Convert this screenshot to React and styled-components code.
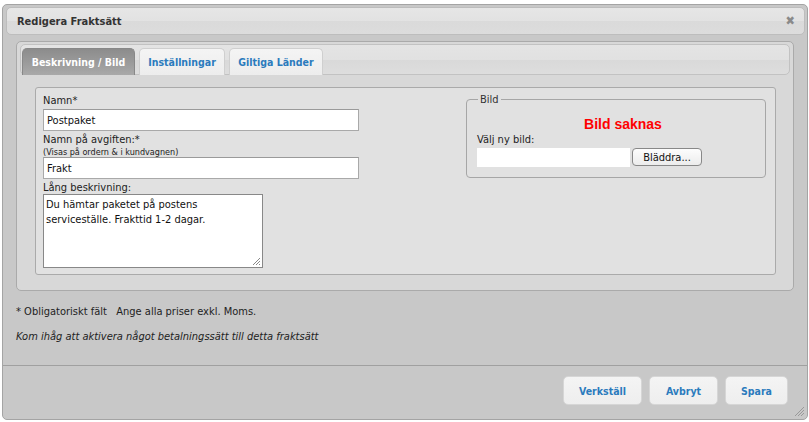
import React from "react";
import styled, { createGlobalStyle } from "styled-components";

const Global = createGlobalStyle`
  html, body { margin: 0; padding: 0; background: #fff; }
  body { font-family: "DejaVu Sans Condensed", "DejaVu Sans", Verdana, sans-serif; font-size: 11px; color: #222; }
`;

const Dialog = styled.div`
  box-sizing: border-box;
  margin: 4px 1px 0 2px;
  width: 806px;
  height: 416px;
  border: 1px solid #a4a4a4;
  border-radius: 5px;
  background: #c8c8c8;
  display: flex;
  flex-direction: column;
  position: relative;
  padding: 2px 2px 0 3px;
`;

const TitleBar = styled.div`
  box-sizing: border-box;
  height: 28px;
  border: 1px solid #bdbdbd;
  border-radius: 5px;
  background: linear-gradient(#e6e6e6 0%, #e2e2e2 50%, #dadada 51%, #dcdcdc 100%);
  display: flex;
  align-items: center;
  justify-content: space-between;
  padding: 0 9px 0 10px;
`;

const Title = styled.span`
  font-weight: bold;
  color: #333;
  font-size: 11px;
`;

const Close = styled.span`
  color: #8a8a8a;
  font-size: 12.5px;
  font-weight: bold;
  line-height: 1;
`;

const Content = styled.div`
  box-sizing: border-box;
  height: 330px;
  display: flex;
  flex-direction: column;
  padding: 6px 11px 0 10px;
`;

const TabBox = styled.div`
  box-sizing: border-box;
  height: 250px;
  border: 1px solid #aaa;
  border-radius: 5px;
  background: #d8d8d8;
  padding: 2px 3px;
`;

const TabHeader = styled.div`
  box-sizing: border-box;
  height: 31px;
  border: 1px solid #c2c2c2;
  border-radius: 5px;
  background: linear-gradient(#e4e4e4 0%, #e1e1e1 50%, #d9d9d9 51%, #dddddd 100%);
  display: flex;
  align-items: flex-end;
  gap: 4px;
  padding: 0 1px;
`;

const Tab = styled.div`
  box-sizing: border-box;
  width: ${(p) => p.$w}px;
  height: 27px;
  margin-bottom: -1px;
  border: 1px solid ${(p) => (p.$active ? "#888" : "#cfcfcf")};
  border-bottom: none;
  border-radius: 5px 5px 0 0;
  display: flex;
  align-items: center;
  justify-content: center;
  font-weight: bold;
  font-size: 10.5px;
  color: ${(p) => (p.$active ? "#fff" : "#2b7bbd")};
  background: ${(p) =>
    p.$active
      ? "linear-gradient(#8c8c8c 0%, #9a9a9a 50%, #a9a9a9 100%)"
      : "linear-gradient(#f4f4f4, #ededed)"};
`;

const Panel = styled.div`
  box-sizing: border-box;
  margin: 12px 14px 0 15px;
  height: 188px;
  border: 1px solid #aaa;
  border-radius: 3px;
  background: #e1e1e1;
  display: flex;
  justify-content: space-between;
  padding: 6px 9px 0 7px;
`;

const LeftCol = styled.div`
  width: 316px;
  display: flex;
  flex-direction: column;
`;

const Label = styled.label`
  display: block;
  color: #222;
  font-size: 11px;
  line-height: 13px;
`;

const Small = styled.span`
  display: block;
  font-size: 9px;
  line-height: 10px;
  margin: 1px 0 -2px;
`;

const TextInput = styled.div`
  box-sizing: border-box;
  width: 316px;
  height: 22px;
  margin: 2px 0 2px;
  border: 1px solid #a9a9a9;
  border-top-color: #9a9a9a;
  background: #fff;
  display: flex;
  align-items: center;
  padding: 0 3px;
  font-size: 11px;
  color: #111;
`;

const TextArea = styled.div`
  box-sizing: border-box;
  position: relative;
  width: 220px;
  height: 74px;
  margin-top: 0;
  border: 1px solid #888;
  background: #fff;
  padding: 2px 2px;
  font-size: 11px;
  line-height: 15px;
  color: #111;
`;

const Grip = styled.svg`
  position: absolute;
  right: 1px;
  bottom: 1px;
`;

const Fieldset = styled.fieldset`
  box-sizing: border-box;
  width: 300px;
  height: 85px;
  margin: -1px 0 0 0;
  border: 1px solid #a6a6a6;
  border-radius: 4px;
  padding: 10px 10px 0 10px;
  display: flex;
  flex-direction: column;
  legend {
    padding: 0 2px;
    margin-left: 1px;
    font-size: 11px;
    color: #333;
  }
`;

const Missing = styled.div`
  font-family: "Liberation Sans", Arial, sans-serif;
  font-weight: bold;
  font-size: 14px;
  color: #f00;
  text-align: center;
  margin: 0 0 1px 14px;
  line-height: 16px;
`;

const FileRow = styled.div`
  display: flex;
  align-items: flex-start;
  gap: 2px;
  margin-top: 2px;
`;

const FileField = styled.div`
  width: 153px;
  height: 19px;
  background: #fff;
`;

const Browse = styled.div`
  box-sizing: border-box;
  height: 18px;
  width: 70px;
  border: 1px solid #888;
  border-radius: 4px;
  background: linear-gradient(#fdfdfd, #ececec);
  display: flex;
  align-items: center;
  justify-content: center;
  font-size: 11px;
  color: #111;
`;

const Note = styled.p`
  margin: ${(p) => p.$m};
  font-size: 11px;
  color: #222;
  font-style: ${(p) => (p.$italic ? "italic" : "normal")};
  white-space: pre;
`;

const ButtonPane = styled.div`
  flex: 1;
  margin: 0 -2px 0 -3px;
  border-top: 1px solid #a0a0a0;
  display: flex;
  justify-content: flex-end;
  align-items: flex-start;
  gap: 7px;
  padding: 10px 19px 0 0;
  position: relative;
`;

const Button = styled.div`
  box-sizing: border-box;
  width: ${(p) => p.$w}px;
  height: 29px;
  border: 1px solid #d6d6d6;
  border-radius: 5px;
  background: linear-gradient(#f4f4f4, #eeeeee);
  display: flex;
  align-items: center;
  justify-content: center;
  font-weight: bold;
  color: #2b7bbd;
  font-size: 10.5px;
`;

const CornerGrip = styled.svg`
  position: absolute;
  right: 2px;
  bottom: 2px;
`;

export default function App() {
  return (
    <>
      <Global />
      <Dialog>
        <TitleBar>
          <Title>Redigera Fraktsätt</Title>
          <Close>✖</Close>
        </TitleBar>
        <Content>
          <TabBox>
            <TabHeader>
              <Tab $active $w={113}>Beskrivning / Bild</Tab>
              <Tab $w={86}>Inställningar</Tab>
              <Tab $w={94}>Giltiga Länder</Tab>
            </TabHeader>
            <Panel>
              <LeftCol>
                <Label>Namn*</Label>
                <TextInput>Postpaket</TextInput>
                <Label>
                  Namn på avgiften:*
                  <Small>(Visas på ordern &amp; i kundvagnen)</Small>
                </Label>
                <TextInput>Frakt</TextInput>
                <Label>Lång beskrivning:</Label>
                <TextArea>
                  Du hämtar paketet på postens serviceställe. Frakttid 1-2 dagar.
                  <Grip width="9" height="9" viewBox="0 0 9 9">
                    <path d="M8 1L1 8M8 4L4 8M8 7L7 8" stroke="#888" strokeWidth="1" />
                  </Grip>
                </TextArea>
              </LeftCol>
              <Fieldset>
                <legend>Bild</legend>
                <Missing>Bild saknas</Missing>
                <Label>Välj ny bild:</Label>
                <FileRow>
                  <FileField />
                  <Browse>Bläddra...</Browse>
                </FileRow>
              </Fieldset>
            </Panel>
          </TabBox>
          <Note $m="14px 0 0 0">{"* Obligatoriskt fält   Ange alla priser exkl. Moms."}</Note>
          <Note $m="12px 0 0 0" $italic>Kom ihåg att aktivera något betalningssätt till detta fraktsätt</Note>
        </Content>
        <ButtonPane>
          <Button $w={79}>Verkställ</Button>
          <Button $w={69}>Avbryt</Button>
          <Button $w={63}>Spara</Button>
          <CornerGrip width="12" height="12" viewBox="0 0 12 12">
            <path d="M11 2L2 11M11 5L5 11M11 8L8 11" stroke="#999" strokeWidth="1" />
          </CornerGrip>
        </ButtonPane>
      </Dialog>
    </>
  );
}
